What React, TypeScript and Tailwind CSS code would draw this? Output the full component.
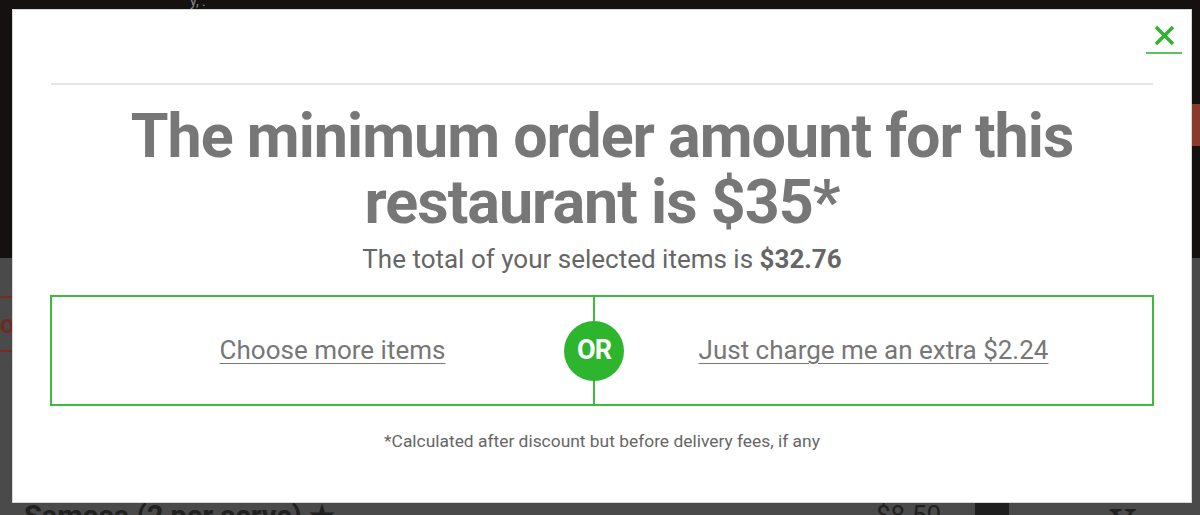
export default function App() {
  return (
    <div className="relative w-[1200px] h-[515px] overflow-hidden bg-[#4a4a4a] font-['Roboto',sans-serif]">
      {/* dimmed page behind the modal */}
      <div className="h-[258px] bg-[#151111] flex items-start">
        <div className="ml-[190px] text-[#8a8a8a] text-[14px] leading-[6px] -mt-[2px]">y, .</div>
        <div className="ml-auto mt-[104px] w-[8px] h-[42px] bg-[#8a3a2a]" />
      </div>
      <div className="mt-[38px] flex">
        <div className="w-[14px] h-[56px] border-y-2 border-[#7a2a22] text-[#6e2a24] text-[26px] leading-[52px] font-bold overflow-hidden">o</div>
      </div>
      <div className="mt-[150px] flex items-start text-[#202020]">
        <div className="ml-[24px] text-[29px] font-bold leading-none">Samosa (2 per serve) ★</div>
        <div className="ml-auto text-[26px] leading-none">$8.50</div>
        <div className="ml-[34px] w-[34px] h-[24px] bg-[#1e1e1e]" />
        <div className="ml-[100px] text-[48px] leading-none font-serif">Your</div>
      </div>

      {/* modal */}
      <div className="absolute left-[12px] top-[9px] w-[1180px] h-[494px] bg-white border border-[#d6d6d6] flex flex-col">
        <div className="flex justify-end pr-[9px] pt-[15px]">
          <button className="w-[36px] flex justify-center pb-[6px] border-b-2 border-[#5cc45c]">
            <svg width="21" height="21" viewBox="0 0 21 21" fill="none" stroke="#2db52d" strokeWidth="3.4">
              <path d="M2 2 L19 19 M19 2 L2 19" />
            </svg>
          </button>
        </div>
        <div className="mx-[38px] mt-[29px] border-t-2 border-[#e6e6e6]" />
        <h1 className="mt-[18px] px-[40px] text-center text-[61px] leading-[66px] tracking-[-1px] font-bold text-[#777777]">
          The minimum order amount for this restaurant is $35*
        </h1>
        <p className="mt-[8px] text-center text-[26px] leading-[32px] text-[#666666]">
          The total of your selected items is <span className="font-bold">$32.76</span>
        </p>
        <div className="mx-[37px] mt-[20px] h-[111px] border-2 border-[#3dbb3d] flex">
          <div className="w-[541px] flex items-center justify-center">
            <a className="text-[26px] text-[#777777] underline underline-offset-[4px] decoration-1 pl-[20px]">Choose more items</a>
          </div>
          <div className="relative w-[2px] bg-[#3dbb3d]">
            <div className="absolute left-1/2 top-1/2 -translate-x-1/2 -translate-y-1/2 w-[60px] h-[60px] rounded-full bg-[#2db52d] flex items-center justify-center text-white text-[27px] font-bold tracking-[-1px]">
              OR
            </div>
          </div>
          <div className="flex-1 flex items-center justify-center">
            <a className="text-[26px] text-[#777777] underline underline-offset-[4px] decoration-1">Just charge me an extra $2.24</a>
          </div>
        </div>
        <p className="mt-[23px] text-center text-[17.4px] leading-[24px] text-[#666666]">
          *Calculated after discount but before delivery fees, if any
        </p>
      </div>
    </div>
  )
}
